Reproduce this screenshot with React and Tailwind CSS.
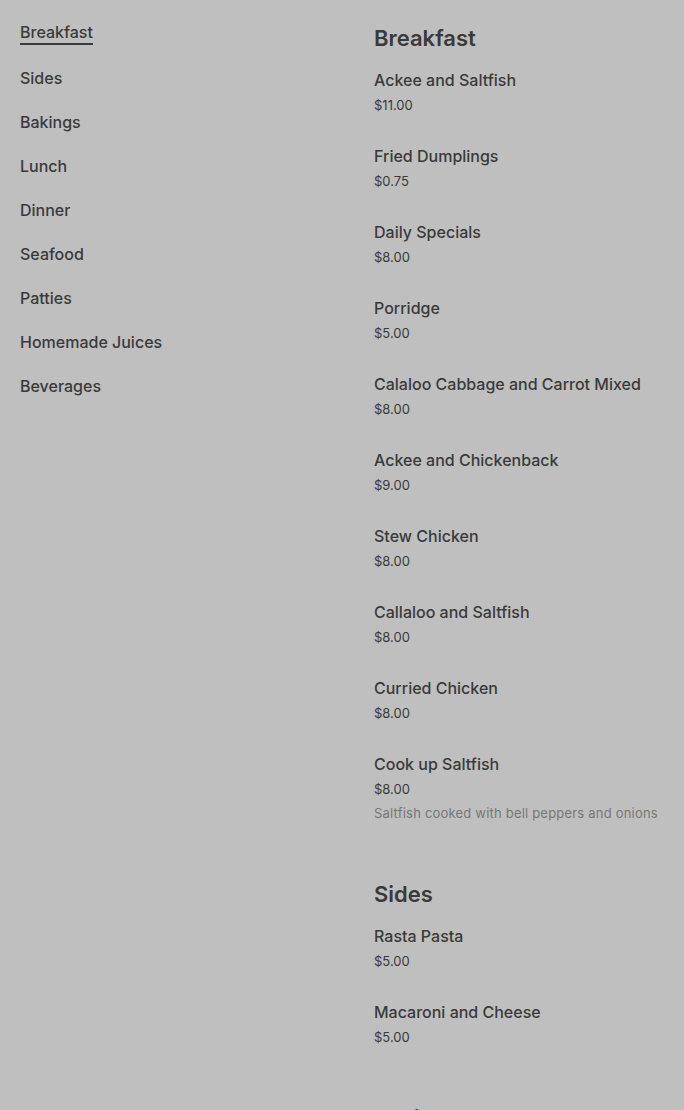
import React from "react";

const nav = ["Breakfast","Sides","Bakings","Lunch","Dinner","Seafood","Patties","Homemade Juices","Beverages"];

const sections = [
  { title: "Breakfast", items: [
    ["Ackee and Saltfish","$11.00"],
    ["Fried Dumplings","$0.75"],
    ["Daily Specials","$8.00"],
    ["Porridge","$5.00"],
    ["Calaloo Cabbage and Carrot Mixed","$8.00"],
    ["Ackee and Chickenback","$9.00"],
    ["Stew Chicken","$8.00"],
    ["Callaloo and Saltfish","$8.00"],
    ["Curried Chicken","$8.00"],
    ["Cook up Saltfish","$8.00","Saltfish cooked with bell peppers and onions"],
  ]},
  { title: "Sides", items: [
    ["Rasta Pasta","$5.00"],
    ["Macaroni and Cheese","$5.00"],
  ]},
  { title: "Bakings", items: [
    ["Coco Bread","$2.00"],
  ]},
];

export default function App() {
  return (
    <div className="h-[1110px] w-[684px] overflow-hidden bg-[#bfbfbf] text-[#3a3a3a]" style={{fontFamily: "Inter, 'Noto Sans', sans-serif"}}>
      <div className="flex">
        <nav className="w-[374px] shrink-0 pl-5 pt-[21px] flex flex-col items-start gap-[22px]">
          {nav.map((n, i) => (
            <a key={n} className={"text-[16px] leading-[22px] font-medium " + (i === 0 ? "border-b-2 border-[#3a3a3a]" : "")}>{n}</a>
          ))}
        </nav>
        <main className="flex-1 pt-[22px] flex flex-col gap-[26px]">
          {sections.map(s => (
            <section key={s.title}>
              <h2 className="text-[22px] leading-8 font-semibold mb-[14px]">{s.title}</h2>
              <div className="flex flex-col">
                {s.items.map(([name, price, desc]) => (
                  <div key={name} className="pb-[29px]">
                    <div className="text-[16px] leading-6 font-medium">{name}</div>
                    <div className="mt-[3px] text-[13px] leading-5">{price}</div>
                    {desc && <div className="mt-1 text-[13px] leading-5 tracking-[0.2px] text-[#777]">{desc}</div>}
                  </div>
                ))}
              </div>
            </section>
          ))}
        </main>
      </div>
    </div>
  );
}
